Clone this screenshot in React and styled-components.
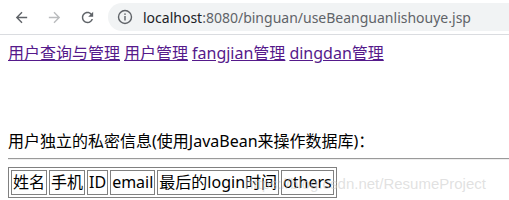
import React from "react";
import styled, { createGlobalStyle } from "styled-components";

const Global = createGlobalStyle`
  html, body { margin: 0; padding: 0; background: #fff; }
  body { font-family: "Noto Sans", "Noto Sans CJK SC", sans-serif; overflow: hidden; }
`;

const Toolbar = styled.div`
  height: 34px;
  border-bottom: 1px solid #dadce0;
  display: flex;
  align-items: center;
  padding-left: 12px;
  background: #fff;
  box-sizing: content-box;
`;

const NavButton = styled.div`
  width: 18px;
  height: 18px;
  margin-right: ${(p) => p.$gap}px;
  display: flex;
  align-items: center;
  justify-content: center;
  color: ${(p) => (p.$disabled ? "#babcbe" : "#5f6368")};
`;

const Omnibox = styled.div`
  flex: 1;
  height: 28px;
  margin-right: -40px;
  border-radius: 14px;
  background: #f1f3f4;
  display: flex;
  align-items: center;
  padding-left: 9px;
`;

const InfoIcon = styled.div`
  width: 16px;
  height: 16px;
  margin-right: 10px;
  color: #5f6368;
  display: flex;
`;

const Url = styled.div`
  font-family: "Noto Sans", sans-serif;
  font-size: 14px;
  color: #5f6368;
  white-space: nowrap;
`;

const Host = styled.span`
  color: #202124;
`;

const Page = styled.div`
  position: relative;
  padding: 8px;
  font-size: 16px;
  line-height: 21px;
  color: #000;
`;

const NavLinks = styled.div`
  display: flex;
  gap: 4px;
`;

const NavLink = styled.a`
  color: #551a8b;
  text-decoration: underline;
  text-underline-offset: 1px;
`;

const Heading = styled.div`
  margin-top: 67px;
`;

const Rule = styled.hr`
  margin: 6px -8px 7px 0;
  border: none;
  border-top: 1px solid #9a9a9a;
  border-bottom: 1px solid #eee;
  height: 0;
`;

const Table = styled.table`
  border: 1px solid #808080;
  border-spacing: 2px;
  position: relative;
  z-index: 1;
`;

const Cell = styled.td`
  border: 1px solid #808080;
  padding: 1px;
  font-size: 16px;
  line-height: 21px;
  white-space: nowrap;
`;

const Watermark = styled.div`
  position: absolute;
  left: 245px;
  top: 138px;
  font-family: "Liberation Sans", Arial, sans-serif;
  font-size: 15px;
  color: rgba(200, 200, 200, 0.55);
  white-space: nowrap;
  z-index: 2;
  pointer-events: none;
`;

const BackIcon = () => (
  <svg width="17" height="17" viewBox="0 0 24 24" fill="currentColor">
    <path d="M20 11H7.83l5.59-5.59L12 4l-8 8 8 8 1.41-1.41L7.83 13H20v-2z" />
  </svg>
);

const ForwardIcon = () => (
  <svg width="17" height="17" viewBox="0 0 24 24" fill="currentColor">
    <path d="M4 11h12.17l-5.59-5.59L12 4l8 8-8 8-1.41-1.41L16.17 13H4v-2z" />
  </svg>
);

const ReloadIcon = () => (
  <svg width="17" height="17" viewBox="0 0 24 24" fill="currentColor">
    <path d="M17.65 6.35C16.2 4.9 14.21 4 12 4c-4.42 0-7.99 3.58-7.99 8s3.570 8 7.99 8c3.73 0 6.84-2.55 7.73-6h-2.08c-.82 2.33-3.04 4-5.65 4-3.31 0-6-2.69-6-6s2.69-6 6-6c1.66 0 3.14.69 4.22 1.78L13 11h7V4l-2.35 2.35z" />
  </svg>
);

const Info = () => (
  <svg width="16" height="16" viewBox="0 0 16 16" fill="none">
    <circle cx="8" cy="8" r="6.5" stroke="currentColor" strokeWidth="1.4" />
    <rect x="7.3" y="7" width="1.4" height="4.5" fill="currentColor" />
    <rect x="7.3" y="4.4" width="1.4" height="1.5" fill="currentColor" />
  </svg>
);

const links = ["用户查询与管理", "用户管理", "fangjian管理", "dingdan管理"];
const headers = ["姓名", "手机", "ID", "email", "最后的login时间", "others"];

export default function App() {
  return (
    <>
      <Global />
      <Toolbar>
        <NavButton $gap={15}><BackIcon /></NavButton>
        <NavButton $gap={15} $disabled><ForwardIcon /></NavButton>
        <NavButton $gap={12}><ReloadIcon /></NavButton>
        <Omnibox>
          <InfoIcon><Info /></InfoIcon>
          <Url>
            <Host>localhost</Host>:8080/binguan/useBeanguanlishouye.jsp
          </Url>
        </Omnibox>
      </Toolbar>
      <Page>
        <NavLinks>
          {links.map((l) => (
            <NavLink key={l} href="#">{l}</NavLink>
          ))}
        </NavLinks>
        <Heading>用户独立的私密信息(使用JavaBean来操作数据库)：</Heading>
        <Rule />
        <Table>
          <tbody>
            <tr>
              {headers.map((h) => (
                <Cell key={h}>{h}</Cell>
              ))}
            </tr>
          </tbody>
        </Table>
        <Watermark>https://blog.csdn.net/ResumeProject</Watermark>
      </Page>
    </>
  );
}
